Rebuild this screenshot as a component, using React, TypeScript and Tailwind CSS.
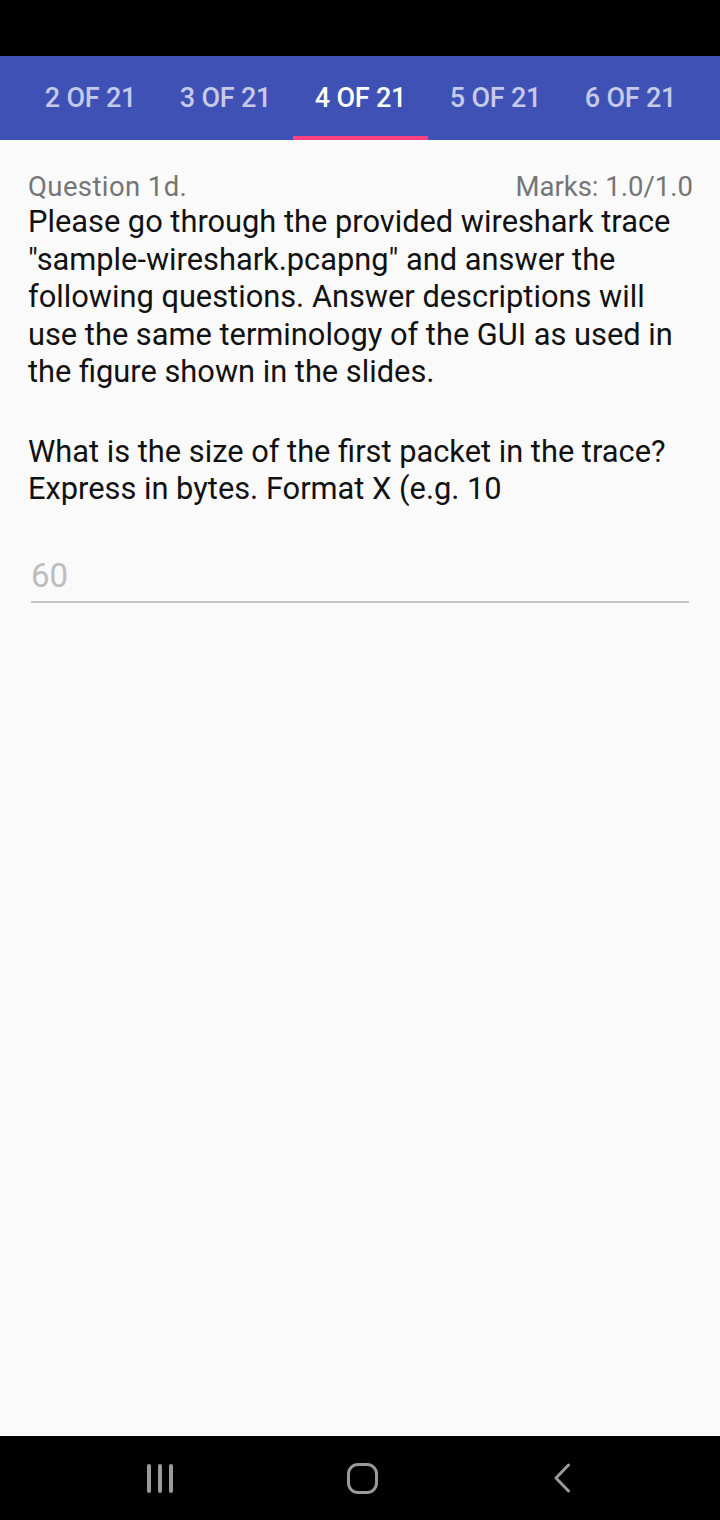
import React from "react";

const tabs = ["1 OF 21", "2 OF 21", "3 OF 21", "4 OF 21", "5 OF 21", "6 OF 21", "7 OF 21"];
const active = 3;

export default function App() {
  return (
    <div className="flex h-[1520px] w-[720px] flex-col overflow-hidden bg-[#fafafa] font-['Roboto',sans-serif]">
      {/* status bar */}
      <div className="h-[56px] shrink-0 bg-black" />

      {/* tab strip, scrolled so tab 4 is centred */}
      <div className="flex h-[84px] shrink-0 overflow-hidden bg-[#3f51b5]">
        {tabs.map((t, i) => (
          <div
            key={t}
            className={`relative flex h-full w-[135px] shrink-0 items-center justify-center text-[27px] font-medium tracking-[-0.2px] ${
              i === 0 ? "-ml-[112px]" : ""
            } ${i === active ? "text-white" : "text-[#c5cae9]"}`}
          >
            <span className="pt-[1px]">{t}</span>
            {i === active && (
              <div className="absolute bottom-0 left-0 h-[4px] w-full bg-[#ff4081]" />
            )}
          </div>
        ))}
      </div>

      {/* question body */}
      <div className="flex flex-1 flex-col px-[28px] pt-[31px]">
        <div className="flex items-baseline justify-between text-[27.5px] leading-[32px] text-[#757575]">
          <span className="tracking-[0.4px]">Question 1d.</span>
          <span className="-mr-[1px]">Marks: 1.0/1.0</span>
        </div>
        <p className="text-[30.8px] leading-[37.5px] text-[#111]">
          Please go through the provided wireshark trace "sample-wireshark.pcapng" and answer the
          following questions. Answer descriptions will use the same terminology of the GUI as used in
          the figure shown in the slides.
        </p>
        <p className="mt-[42px] text-[30.8px] leading-[37.5px] text-[#111]">
          What is the size of the first packet in the trace? Express in bytes. Format X (e.g. 10
        </p>

        <div className="mx-[3px] mt-[48px] border-b-2 border-[#c4c4c4] pb-[5px]">
          <span className="block text-[33px] leading-[40px] text-[#bdbdbd]">60</span>
        </div>
      </div>

      {/* navigation bar */}
      <div className="flex h-[84px] shrink-0 items-center justify-between bg-black px-[147px] pr-[149px]">
        <div className="flex h-[29px] gap-[7.5px]">
          <div className="h-full w-[3.5px] rounded-full bg-[#9a9a9a]" />
          <div className="h-full w-[3.5px] rounded-full bg-[#9a9a9a]" />
          <div className="h-full w-[3.5px] rounded-full bg-[#9a9a9a]" />
        </div>
        <div className="h-[31px] w-[31px] rounded-[11px] border-[3px] border-[#9a9a9a]" />
        <svg width="18" height="30" viewBox="0 0 18 30">
          <path d="M15.5 2 L3 15 L15.5 28" fill="none" stroke="#9a9a9a" strokeWidth="3" strokeLinecap="round" strokeLinejoin="round" />
        </svg>
      </div>
    </div>
  );
}
